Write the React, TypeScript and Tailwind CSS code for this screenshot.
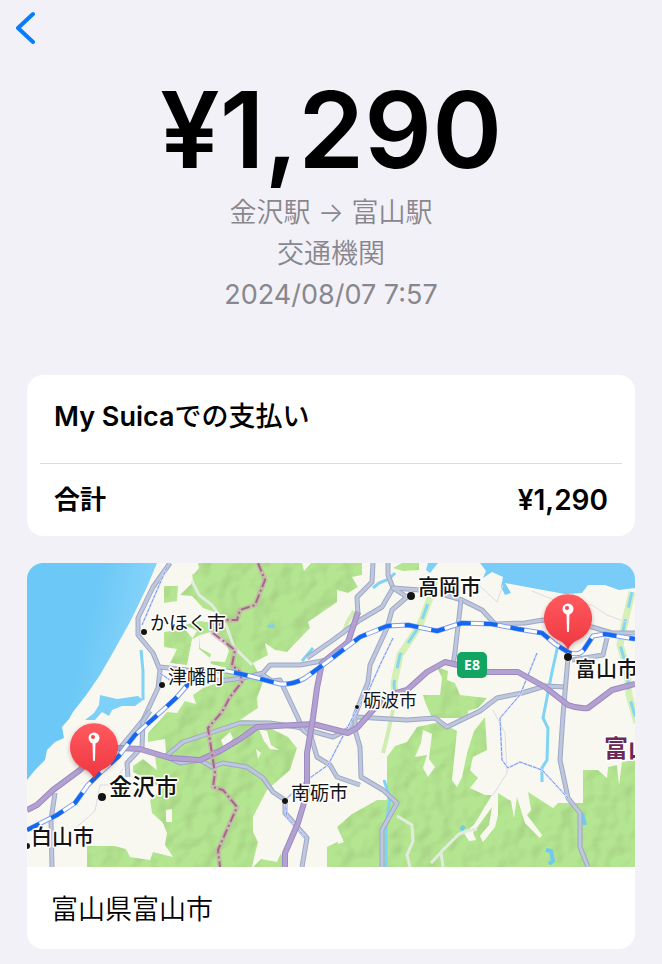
type Label = { text: string; x: number; y: number; size: number; weight: number; dot?: [number, number, number] }

const LABELS: Label[] = [
  { text: 'かほく市', x: 123, y: 67, size: 19, weight: 400, dot: [117, 69, 3] },
  { text: '津幡町', x: 141, y: 121, size: 19, weight: 400, dot: [135, 122, 3] },
  { text: '金沢市', x: 82, y: 232, size: 23, weight: 500, dot: [75, 234, 4] },
  { text: '白山市', x: 4, y: 281, size: 21, weight: 500, dot: [0, 283, 3] },
  { text: '高岡市', x: 391, y: 31, size: 21, weight: 500, dot: [384, 33, 4] },
  { text: '砺波市', x: 336, y: 144, size: 18, weight: 400, dot: [330, 144, 2] },
  { text: '南砺市', x: 264, y: 237, size: 19, weight: 400, dot: [258, 238, 3] },
  { text: '富山市', x: 548, y: 113, size: 21, weight: 500, dot: [541, 94, 4] },
]

const FORESTS = [
  'M164 0 L166 19 L153 32 L165 33 L176 45 L190 50 L186 60 L173 58 L158 62 L170 68 L165 76 L160 102 L143 100 L150 86 L137 84 L137 69 L158 66 L166 76 L173 72 L172 86 L182 94 L184 101 L200 105 L193 119 L176 125 L166 132 L169 141 L158 138 L150 150 L140 149 L133 157 L121 170 L121 179 L138 176 L139 190 L128 194 L130 207 L116 196 L106 203 L106 209 L126 219 L135 227 L123 237 L125 250 L136 260 L140 270 L138 282 L146 294 L126 289 L123 297 L103 294 L99 286 L88 283 L60 283 L60 304 L225 304 L231 279 L226 269 L226 254 L240 227 L263 207 L270 185 L261 174 L243 165 L246 158 L213 157 L231 145 L230 135 L236 119 L226 100 L241 92 L238 80 L248 87 L260 89 L283 65 L281 59 L310 39 L310 27 L321 30 L331 24 L325 14 L335 12 L335 0 Z',
  'M137 23 L151 23 L150 38 L137 40 Z',
  'M396 132 L413 132 L415 115 L410 104 L421 108 L420 117 L428 120 L433 132 L460 135 L451 145 L441 148 L441 155 L405 155 L398 139 Z',
  'M413 159 L390 164 L380 179 L368 183 L360 194 L360 237 L350 237 L325 251 L310 264 L316 277 L308 280 L300 284 L300 304 L608 304 L608 197 L595 199 L592 222 L590 202 L581 204 L580 215 L571 207 L556 207 L556 240 L531 240 L526 245 L501 229 L504 247 L500 252 L515 272 L513 275 L498 260 L490 234 L487 255 L484 238 L471 230 L471 252 L468 264 L456 279 L453 273 L462 262 L465 244 L446 270 L449 277 L442 278 L437 270 L447 262 L465 232 L458 232 L443 225 L451 215 L443 207 L446 194 L460 187 L458 154 L447 168 L440 190 L435 214 L430 224 L425 217 L428 188 L430 168 Z',
  'M366 5 L375 0 L392 0 L392 7 L376 8 Z',
  'M226 304 L234 296 L250 299 L254 290 L258 304 Z',
]

const ROADS = [
  'M143 0 L126 24 L111 55 L111 72 L126 90 L133 107 L131 125 L116 157 L93 185',
  'M133 104 L160 107 L193 118 L216 115 L236 110 L243 102 L273 102 L300 97',
  'M28 230 L24 257 L25 304',
  'M123 148 L116 158 L115 184 L100 200 L101 214',
  'M138 194 L156 179 L183 170 L213 160 L243 160 L270 164 L306 174 L320 167 L328 157',
  'M140 194 L153 200 L173 197 L185 204 L196 200 L220 204 L236 215 L246 229 L258 237 L258 250 L280 275 L275 304',
  'M280 95 L306 77 L333 57 L355 44 L366 25 L361 12 L361 0',
  'M346 0 L345 19 L330 34 L331 52',
  'M393 27 L366 25 L380 34 L365 47 L360 65 L343 102 L341 119 L328 152 L328 167 L333 184 L334 214 L356 227 L370 240 L355 267 L355 304',
  'M283 170 L290 194 L303 202 L310 214 L333 222',
  'M330 154 L380 157 L408 155 L420 164 L453 148 L470 135 L495 130 L518 123 L538 124',
  'M236 112 L245 118 L253 117 L271 155 L276 167 L286 175',
  'M418 32 L435 37 L455 47 L468 61 L498 60 L516 57 L565 64 L585 70 L608 70',
  'M434 37 L428 89 L426 102',
  'M541 95 L536 152 L533 197 L541 235 L553 250 L553 284 L561 304',
  'M545 97 L576 92 L580 75',
]

const HIGHWAYS = [
  'M0 247 L10 242 L26 227 L53 207 L73 187 L93 185 L113 186 L143 195 L173 197 L193 188 L213 176 L230 164 L286 161 L321 170 L330 165 L346 147 L366 131 L380 127 L400 109 L418 99 L461 109 L491 109 L518 124 L541 142 Q551 146 561 145 L585 127 L608 121',
  'M331 49 L321 79 L295 100 L290 125 L286 155 L280 190 L280 230 L271 260 L258 290 L258 304',
]

const TRAILS = [
  'M140 4 L115 62',
  'M133 110 L144 118',
  'M366 75 L353 102 L341 129 L328 150 L301 202 L280 217 L258 237 L260 254 L278 274',
  'M510 90 L493 132 L473 155 L475 197 L481 205 L493 199 L515 207 L541 235',
]

const RIVERS = [
  'M114 87 L116 108 L116 137',
  'M531 82 L525 109 L518 145 L516 155 L521 165 L520 197 L515 205 L515 219',
  'M357 217 L363 235 L359 263 L359 304',
  'M275 98 L286 85',
  'M346 25 L352 20 L362 16 L368 10',
]

const STREAMS = [
  'M408 14 L403 35 L393 62 L373 92 L367 120 L368 139',
  'M605 29 L598 59 L593 82 L600 105 L602 132 L610 160',
]

const BORDER =
  'M231 0 L238 17 L228 42 L213 47 L210 57 L196 57 L186 70 L208 87 L205 102 L213 109 L215 119 L203 134 L195 149 L181 165 L188 210 L186 224 L196 227 L210 244 L191 287 L193 304'

const RAILWAY =
  'M0 267 L30 252 L48 240 L61 222 L73 210 L91 194 L108 172 L136 147 L150 134 L163 119 Q172 106 200 108 L223 113 L253 121 Q266 122 278 115 L300 99 L333 74 L360 63 L381 62 L410 68 L435 60 L465 61 L491 66 L515 70 L528 81 L541 89 Q553 94 558 85 L566 73 L578 71 L608 76'

function Pin({ x, y }: { x: number; y: number }) {
  return (
    <g transform={`translate(${x} ${y})`}>
      <path
        d="M0 1 C-2 -4 -5 -7 -10 -9 A24 24 0 1 1 10 -9 C5 -7 2 -4 0 1 Z"
        fill="url(#pin)"
        filter="url(#pinShadow)"
      />
      <path d="M-1.5 -36 L1.5 -36 L1 -17.5 Q0 -16 -1 -17.5 Z" fill="#fff" />
      <circle cy="-40" r="5.5" fill="#fff" />
      <circle cx="-1" cy="-41" r="2" fill="#f5474f" />
    </g>
  )
}

function RouteMap() {
  return (
    <svg viewBox="0 0 608 304" className="block h-auto w-full" role="img" aria-label="金沢駅から富山駅までの地図">
      <defs>
        <linearGradient id="sea" x1="0" y1="0" x2="1" y2="0.4">
          <stop offset="0.5" stopColor="#6cc8f6" />
          <stop offset="1" stopColor="#8ed8fb" />
        </linearGradient>
        <linearGradient id="pin" x1="0" y1="0" x2="0" y2="1">
          <stop offset="0" stopColor="#ff5a5f" />
          <stop offset="1" stopColor="#ee3640" />
        </linearGradient>
        <filter id="pinShadow" x="-30%" y="-20%" width="160%" height="150%">
          <feDropShadow dx="0" dy="2" stdDeviation="2" floodColor="#5b2b2b" floodOpacity="0.35" />
        </filter>
        {/* Hill shading */}
        <filter id="relief" x="0" y="0" width="100%" height="100%" colorInterpolationFilters="sRGB">
          <feTurbulence type="fractalNoise" baseFrequency="0.05" numOctaves="2" seed="4" result="noise" />
          <feDiffuseLighting in="noise" surfaceScale="1" diffuseConstant="1.12" lightingColor="#fff" result="light">
            <feDistantLight azimuth="215" elevation="62" />
          </feDiffuseLighting>
          <feComposite in="light" in2="SourceAlpha" operator="in" result="shade" />
          <feBlend in="SourceGraphic" in2="shade" mode="multiply" />
        </filter>
      </defs>

      <rect width="608" height="304" fill="#f9f8f0" />

      {/* Sea and lagoon */}
      <path d="M0 0 L130 0 L120 24 L104 57 L88 86 L73 112 L60 131 L46 149 L42 156 L35 164 L37 175 L28 179 L20 187 L18 197 L8 207 L0 217 Z" fill="url(#sea)" />
      <path d="M453 0 L459 8 L456 15 L465 9 L476 14 L474 24 L478 32 L484 30 L478 20 L505 25 L538 31 L555 30 L561 22 L578 22 L592 27 L608 25 L608 0 Z" fill="#78ccf7" />
      <path d="M73 132 L90 136 L111 133 L116 137 L108 143 L95 143 L85 147 L82 153 L75 149 L68 157 L58 157 L67 150 L72 142 Z" fill="#7dd0f7" />
      <path d="M401 0 L411 0 L403 10 L399 7 Z" fill="#7dd0f7" />

      <g fill="#b4e590" filter="url(#relief)">
        {FORESTS.map((d) => (
          <path key={d} d={d} />
        ))}
      </g>

      {/* Clearings inside the hills */}
      <path d="M173 72 L187 68 L197 76 L202 88 L198 99 L182 98 L184 91 L173 85 Z M160 0 L171 0 L172 5 L166 12 Z M275 0 L284 0 L277 8 Z M232 166 L240 168 L244 182 L252 187 L243 186 L237 178 Z M229 186 L234 190 L231 196 Z M396 167 L405 171 L402 196 L408 204 L401 214 L396 205 L400 192 L388 194 L394 180 Z M311 270 L317 279 L311 281 Z M139 247 L145 246 L145 259 L139 259 Z M194 177 L203 169 L206 175 L198 187 Z" fill="#f9f8f0" />
      <path d="M240 62 L247 61 L248 65 L241 65 Z" fill="#7dd0f7" />
      <path d="M327 48 L320 60 L316 72 M366 147 L361 170 L356 190" fill="none" stroke="#cfedb3" strokeWidth="4" />

      {STREAMS.map((d) => (
        <g key={d} fill="none">
          <path d={d} stroke="#d5efb8" strokeWidth="7" />
          <path d={d} stroke="#86d6f2" strokeWidth="3" strokeDasharray="16 12" />
        </g>
      ))}
      {RIVERS.map((d) => (
        <path key={d} d={d} fill="none" stroke="#7fd3f4" strokeWidth="3" />
      ))}
      <path d="M519 287 L524 288 L526 298 L522 301 M434 267 L437 263 M555 250 L558 262" fill="none" stroke="#6fcaf0" strokeWidth="4" />

      {/* Minor roads */}
      <g fill="none" stroke="#e1ecdf" strokeWidth="3">
        <path d="M165 18 L172 32 L185 42 L199 62 L207 84 L225 102" />
        <path d="M370 253 L385 262 L386 278 L380 292 L383 304" />
        <path d="M450 266 L440 268 L432 271 L416 287 L404 300 M414 289 L416 304" />
      </g>
      <path d="M45 268 L68 248 L73 222 L84 222 L96 206 M466 147 L478 170 L480 210 L466 232 M453 23 L470 39 L476 22 M505 28 L540 42 L565 42 L580 52 L602 60" fill="none" stroke="#dcdce4" />

      {ROADS.map((d) => (
        <g key={d} fill="none" strokeLinejoin="round">
          <path d={d} stroke="#9ea8c8" strokeWidth="5" />
          <path d={d} stroke="#bfc7dc" strokeWidth="3" />
        </g>
      ))}
      {TRAILS.map((d) => (
        <g key={d} fill="none">
          <path d={d} stroke="#dce3fa" strokeWidth="2" />
          <path d={d} stroke="#7795ec" strokeDasharray="4 1" />
        </g>
      ))}
      {HIGHWAYS.map((d) => (
        <g key={d} fill="none" strokeLinejoin="round">
          <path d={d} stroke="#9c8ac2" strokeWidth="6" />
          <path d={d} stroke="#b2a1d1" strokeWidth="4" />
        </g>
      ))}

      {/* Prefecture border */}
      <path d={BORDER} fill="none" stroke="#c9a5b5" strokeOpacity="0.6" strokeWidth="5" strokeLinejoin="round" />
      <path d={BORDER} fill="none" stroke="#a9648a" strokeWidth="2" strokeDasharray="9 3 2 3" />

      <g fill="none" strokeLinejoin="round">
        <path d={RAILWAY} stroke="#7f9fee" strokeWidth="5" />
        <path d={RAILWAY} stroke="#fff" strokeWidth="3" />
        <path d={RAILWAY} stroke="#1268f0" strokeWidth="4" strokeDasharray="14 13" />
      </g>

      {/* Expressway shield */}
      <rect x="430" y="89" width="30" height="26" rx="5" fill="#12a562" />
      <text x="445" y="107" textAnchor="middle" fontSize="14" fontWeight="700" fill="#fff" fontFamily='"Noto Sans", sans-serif'>
        E8
      </text>

      <g fontFamily='"Noto Sans CJK JP", sans-serif' stroke="#fff" strokeWidth="3" strokeLinejoin="round" paintOrder="stroke">
        {LABELS.map((l) => (
          <g key={l.text} fill="#141414">
            {l.dot && <circle cx={l.dot[0]} cy={l.dot[1]} r={l.dot[2]} strokeWidth="1" />}
            <text x={l.x} y={l.y} fontSize={l.size} fontWeight={l.weight}>
              {l.text}
            </text>
          </g>
        ))}
        <text x="577" y="194" fontSize="24" fontWeight="700" fill="#6b2a55">
          富山
        </text>
      </g>

      <Pin x={67} y={215} />
      <Pin x={541} y={86} />
    </svg>
  )
}

export default function App() {
  return (
    <div className="min-h-screen bg-[#f2f1f7] pb-4 font-['Inter','Noto_Sans_CJK_JP',sans-serif] text-black">
      <header className="flex h-14 items-center px-3">
        <button type="button" aria-label="戻る" className="p-1 text-[#087bfe]">
          <svg width="20" height="34" viewBox="0 0 20 34" fill="none" stroke="currentColor" strokeWidth="4" strokeLinecap="round" strokeLinejoin="round">
            <path d="M17 3 L2 17 L17 31" />
          </svg>
        </button>
      </header>

      <main className="px-[27px]">
        {/* Summary */}
        <section className="pt-3 text-center">
          <h1 className="text-[106px] leading-[124px] font-semibold">¥1,290</h1>
          <div className="text-[27px] leading-[41px] font-[350] text-[#88878d]">
            <p>金沢駅 → 富山駅</p>
            <p>交通機関</p>
            <p className="font-normal">2024/08/07 7:57</p>
          </div>
        </section>

        {/* Payment */}
        <section className="mt-[60px] rounded-2xl bg-white px-[13px] text-[27px] font-semibold">
          <h2 className="border-b border-[#dcdcde] px-[14px] pt-[22px] pb-[26px] leading-10">
            My Suica<span className="font-medium">での支払い</span>
          </h2>
          <dl className="flex items-center justify-between px-[14px] py-4 leading-10">
            <dt className="text-[26px]">合計</dt>
            <dd className="text-[28px]">¥1,290</dd>
          </dl>
        </section>

        {/* Map */}
        <section className="mt-[27px] overflow-hidden rounded-2xl bg-white">
          <RouteMap />
          <p className="px-6 pt-[23px] pb-[19px] text-[27px] leading-10 font-[350]">富山県富山市</p>
        </section>
      </main>
    </div>
  )
}
